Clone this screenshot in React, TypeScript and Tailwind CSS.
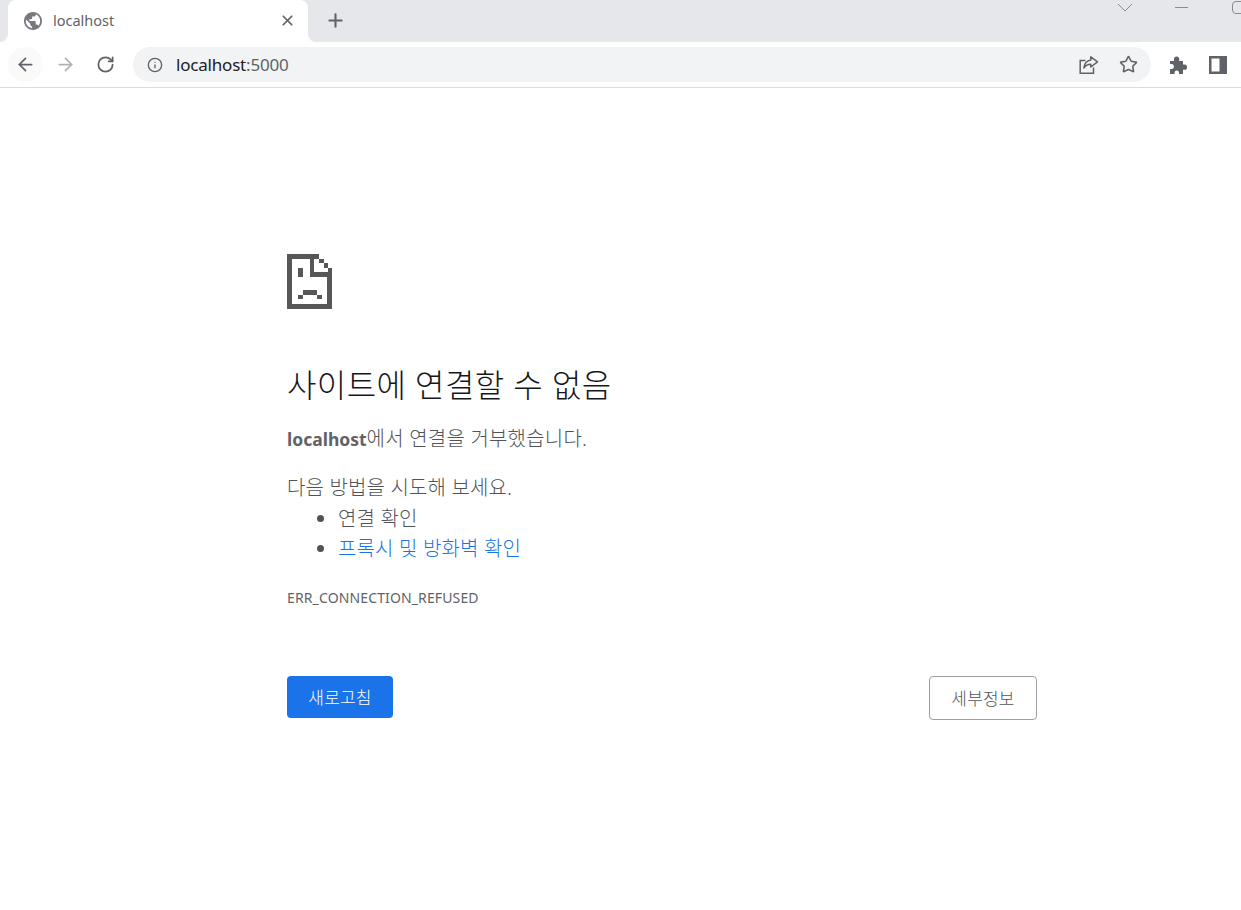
import { ArrowLeft, ArrowRight, RotateCw, Info, Star, X, Plus } from "lucide-react";

function Globe() {
  return (
    <svg width="18" height="18" viewBox="2 2 20 20" className="shrink-0">
      <path fill="#75787c" d="M12 2C6.480 2 2 6.480 2 12s4.480 10 10 10 10-4.480 10-10S17.520 2 12 2zm-1 17.930c-3.950-.490-7-3.850-7-7.930 0-.620.080-1.210.210-1.790L9 15v1c0 1.100.900 2 2 2v1.930zm6.900-2.540c-.260-.810-1-1.390-1.900-1.390h-1v-3c0-.550-.450-1-1-1H8v-2h2c.550 0 1-.450 1-1V7h2c1.100 0 2-.900 2-2v-.410c2.930 1.190 5 4.060 5 7.410 0 2.080-.800 3.970-2.100 5.390z" />
    </svg>
  );
}

function Share() {
  return (
    <svg width="20" height="20" viewBox="0 0 20 20" fill="none" stroke="#5f6368" strokeWidth="1.5" className="shrink-0">
      <path d="M6.500 5.500 H1.200 V18.200 H14.500 V12.500" />
      <path d="M11.800 1.800 L18.500 6.800 L11.800 12 V9.200 C8.500 9.200 6.500 10.600 4.800 13 C5.300 9 7.600 5.600 11.800 5 Z" strokeLinejoin="round" />
    </svg>
  );
}

function Puzzle() {
  return (
    <svg width="18" height="18" viewBox="0 0 18 18" fill="#5f6368" className="shrink-0">
      <path d="M1 5 H5 V3 A2.600 2.600 0 0 1 10.200 3 V5 H14 V8.600 H15.400 A2.600 2.600 0 0 1 15.400 13.800 H14 V18 H10 V16.600 A2.200 2.200 0 0 0 5.600 16.600 V18 H1 V13 H2.400 A2.500 2.500 0 0 0 2.400 8 H1 Z" />
    </svg>
  );
}

function SidePanel() {
  return (
    <svg width="18" height="18" viewBox="0 0 18 18" className="shrink-0">
      <path fillRule="evenodd" d="M0 0 H18 V18 H0 Z M2.500 2.500 V15.500 H10.500 V2.500 Z" fill="#5f6368" />
    </svg>
  );
}

function SadPage() {
  return (
    <svg width="45" height="55" viewBox="0 0 45 55" fill="#575757" shapeRendering="crispEdges" className="block">
      <path d="M0 0 H27 V18 H45 V55 H0 Z M5 5 V50 H40 V23 H23 V5 Z" fillRule="evenodd" />
      <rect x="27" y="0" width="5" height="4.500" />
      <rect x="32" y="4.500" width="4.500" height="4.500" />
      <rect x="36.500" y="9" width="4.500" height="4.500" />
      <rect x="41" y="13.500" width="4" height="4.500" />
      <rect x="11" y="13.500" width="4.500" height="9" />
      <rect x="11" y="40.500" width="4.500" height="4.500" />
      <rect x="15.500" y="36" width="14.500" height="4.500" />
      <rect x="30" y="40.500" width="4.500" height="4.500" />
    </svg>
  );
}

export default function App() {
  return (
    <div className="min-h-[910px] bg-white font-['Noto_Sans','Noto_Sans_CJK_KR',sans-serif] overflow-hidden">
      <div className="h-[42px] bg-[#e6e7eb] flex items-end relative">
        <div className="relative ml-2 w-[300px] h-[42px] bg-white rounded-t-lg flex items-center pl-[16px] pr-[12px] pb-[1px]">
          <Globe />
          <span className="ml-[11px] flex-1 text-[14.500px] text-[#5f6368]">localhost</span>
          <X size={17} color="#5f6368" strokeWidth={2.4} />
          <span className="absolute -left-2 bottom-0 w-2 h-2 bg-white">
            <span className="block w-2 h-2 bg-[#e6e7eb] rounded-br-lg" />
          </span>
          <span className="absolute -right-2 bottom-0 w-2 h-2 bg-white">
            <span className="block w-2 h-2 bg-[#e6e7eb] rounded-bl-lg" />
          </span>
        </div>
        <div className="ml-[17px] h-[42px] flex items-center pb-[1px]">
          <Plus size={21} color="#5f6368" strokeWidth={2.4} />
        </div>
        <svg width="16" height="9" viewBox="0 0 16 9" fill="none" stroke="#8a8c90" strokeWidth="1" className="absolute left-[1117px] top-[3px]">
          <path d="M1 1 L8 8 L15 1" />
        </svg>
        <span className="absolute left-[1175px] top-[7px] w-[13px] h-px bg-[#8a8c90]" />
        <span className="absolute left-[1232px] top-[1px] w-[13px] h-[13px] border border-[#8a8c90] rounded-sm" />
      </div>

      <div className="h-[46px] bg-white border-b border-[#dadce0] flex items-center">
        <div className="ml-[8px] w-[35px] h-[35px] rounded-full bg-[#fafafa] flex items-center justify-center">
          <ArrowLeft size={21} color="#5f6368" strokeWidth={2} />
        </div>
        <div className="ml-[5px] w-[35px] h-[35px] flex items-center justify-center">
          <ArrowRight size={21} color="#b0b2b5" strokeWidth={2} />
        </div>
        <div className="ml-[5px] w-[35px] h-[35px] flex items-center justify-center">
          <RotateCw size={19} color="#5f6368" strokeWidth={2.2} />
        </div>
        <div className="ml-[10px] w-[1018px] h-[35px] rounded-full bg-[#f1f3f4] flex items-center pl-[14px] pr-[13px]">
          <Info size={16} color="#5f6368" strokeWidth={2} />
          <span className="ml-[13px] flex-1 text-[17px] tracking-[-0.2px] text-[#202124]">
            localhost<span className="text-[#5f6368]">:5000</span>
          </span>
          <Share />
          <span className="ml-[20px]"><Star size={19} color="#5f6368" strokeWidth={2} /></span>
        </div>
        <div className="ml-[18px]"><Puzzle /></div>
        <div className="ml-[22px]"><SidePanel /></div>
      </div>

      <main className="ml-[287px] w-[750px] pt-[166px]">
        <SadPage />
        <h1 className="mt-[56px] text-[32px] tracking-[0.4px] leading-[40px] font-light text-[#16171a]">사이트에 연결할 수 없음</h1>
        <p className="mt-[19px] text-[20px] tracking-[0.2px] leading-[30px] font-light text-[#505458]"><b className="font-bold text-[17.500px] tracking-normal text-[#5f6368]">localhost</b>에서 연결을 거부했습니다.</p>
        <p className="mt-[19px] text-[20px] tracking-[0.15px] leading-[30px] font-light text-[#505458]">다음 방법을 시도해 보세요.</p>
        <ul className="list-disc mt-[1px] pl-[51px] text-[20px] tracking-[0.15px] leading-[30px] font-light text-[#505458]">
          <li>연결 확인</li>
          <li><a className="text-[#1a73e8]">프록시 및 방화벽 확인</a></li>
        </ul>
        <p className="mt-[24px] text-[14px] tracking-[0.13px] leading-[20px] font-normal text-[#5f6368]">ERR_CONNECTION_REFUSED</p>
        <div className="mt-[68px] flex items-start justify-between">
          <button className="w-[106px] h-[42px] pt-[2px] rounded bg-[#1a73e8] text-white text-[17px] tracking-[0.2px] font-light">새로고침</button>
          <button className="w-[108px] h-[44px] pt-[2px] rounded border border-[#9aa0a6] bg-white text-[#505458] text-[17px] tracking-[0.2px] font-light">세부정보</button>
        </div>
      </main>
    </div>
  );
}
